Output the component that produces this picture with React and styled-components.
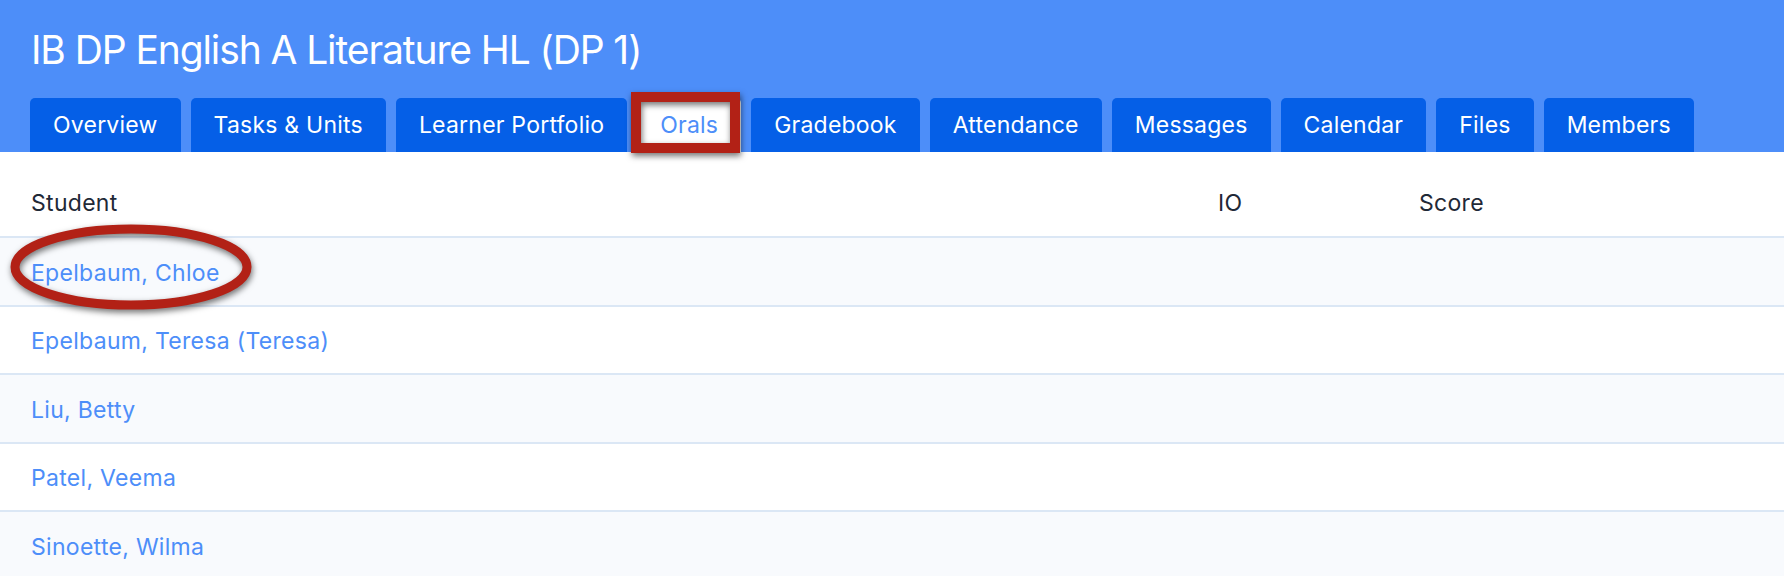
import React from "react";
import styled, { createGlobalStyle } from "styled-components";

const GlobalStyle = createGlobalStyle`
  body {
    margin: 0;
    background: #ffffff;
    font-family: Inter, "Noto Sans", sans-serif;
  }
`;

const Page = styled.div`
  width: 1784px;
  height: 576px;
  overflow: hidden;
  background: #ffffff;
`;

const Header = styled.header`
  background: #4d8ef9;
  padding: 26px 0 0 30px;
`;

const Title = styled.h1`
  margin: 0;
  font-size: 39px;
  line-height: 48px;
  font-weight: 400;
  letter-spacing: -1.1px;
  color: #ffffff;
  padding-left: 1px;
`;

const Tabs = styled.nav`
  display: flex;
  gap: 10px;
  margin-top: 24px;
`;

const Tab = styled.div`
  position: relative;
  height: 54px;
  display: flex;
  align-items: center;
  padding: 0 23px;
  border-radius: 5px 5px 0 0;
  font-size: 23px;
  letter-spacing: 0.22px;
  color: ${(props) => (props.active ? "#4d8ef9" : "#ffffff")};
  background: ${(props) => (props.active ? "#ffffff" : "#055fe7")};
`;

const TabMarker = styled.span`
  position: absolute;
  left: -6px;
  top: -6px;
  width: 109px;
  height: 61px;
  box-sizing: border-box;
  border: 10px solid #b22116;
  filter: drop-shadow(1px 3px 3px rgba(0, 0, 0, 0.55));
`;

const Table = styled.div`
  display: flex;
  flex-direction: column;
`;

const Row = styled.div`
  display: grid;
  grid-template-columns: 1187px 201px 1fr;
  align-items: center;
  padding-left: 31px;
  font-size: 23px;
  letter-spacing: 0.3px;
  height: ${(props) => (props.head ? "67px" : "63.5px")};
  padding-top: ${(props) => (props.head ? "17px" : "3px")};
  border-top: ${(props) => (props.head ? "none" : "2px solid #dbe7f5")};
  background: ${(props) => (props.striped ? "#f8fafd" : "#ffffff")};
  color: ${(props) => (props.head ? "#1f2937" : "#4d8ef9")};
`;

const Name = styled.span`
  position: relative;
  justify-self: start;
`;

const Ring = styled.svg`
  position: absolute;
  left: -21px;
  top: -35px;
  overflow: visible;
  filter: drop-shadow(1px 3px 3px rgba(0, 0, 0, 0.55));
`;

const tabs = [
  "Overview",
  "Tasks & Units",
  "Learner Portfolio",
  "Orals",
  "Gradebook",
  "Attendance",
  "Messages",
  "Calendar",
  "Files",
  "Members",
];

const students = [
  "Epelbaum, Chloe",
  "Epelbaum, Teresa (Teresa)",
  "Liu, Betty",
  "Patel, Veema",
  "Sinoette, Wilma",
];

export default function App() {
  return (
    <Page>
      <GlobalStyle />
      <Header>
        <Title>IB DP English A Literature HL (DP 1)</Title>
        <Tabs>
          {tabs.map((t) => (
            <Tab key={t} active={t === "Orals"}>
              {t}
              {t === "Orals" && <TabMarker />}
            </Tab>
          ))}
        </Tabs>
      </Header>
      <Table>
        <Row head>
          <span>Student</span>
          <span>IO</span>
          <span>Score</span>
        </Row>
        {students.map((s, i) => (
          <Row key={s} striped={i % 2 === 0}>
            <Name>
              {s}
              {i === 0 && (
                <Ring width="242" height="86" viewBox="0 0 242 86">
                  <ellipse
                    cx="121"
                    cy="43"
                    rx="116"
                    ry="38"
                    fill="none"
                    stroke="#b22116"
                    strokeWidth="9"
                  />
                </Ring>
              )}
            </Name>
            <span />
            <span />
          </Row>
        ))}
      </Table>
    </Page>
  );
}
